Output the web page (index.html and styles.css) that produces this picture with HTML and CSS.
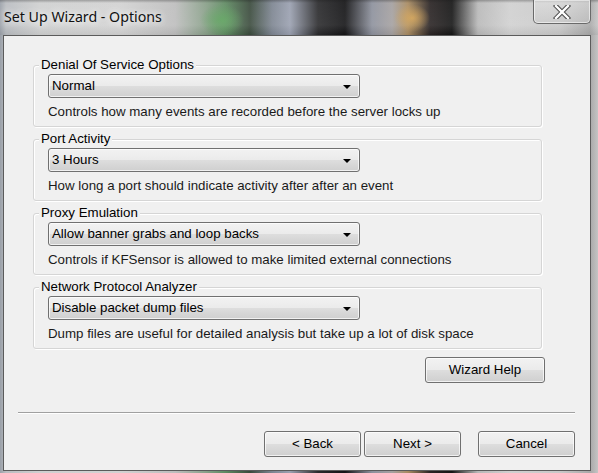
FILE: index.html
```html
<!DOCTYPE html>
<html>
<head>
<meta charset="utf-8">
<link rel="stylesheet" href="styles.css">
</head>
<body>
<div class="window">
  <div class="titlebar">
    <div class="title">Set Up Wizard - Options</div>
    <div class="close-btn">
      <svg width="18" height="14" viewBox="0 0 18 14">
        <path d="M3 1 L15 13 M15 1 L3 13" stroke="#4a4a4a" stroke-width="4.4" stroke-linecap="square" fill="none"/>
        <path d="M3 1 L15 13 M15 1 L3 13" stroke="#ffffff" stroke-width="2.4" stroke-linecap="square" fill="none"/>
      </svg>
    </div>
  </div>
  <div class="client">
    <div class="groups">
      <div class="group">
        <div class="group-label">Denial Of Service Options</div>
        <div class="select"><span>Normal</span><i class="arrow"></i></div>
        <div class="desc">Controls how many events are recorded before the server locks up</div>
      </div>
      <div class="group">
        <div class="group-label">Port Activity</div>
        <div class="select"><span>3 Hours</span><i class="arrow"></i></div>
        <div class="desc">How long a port should indicate activity after after an event</div>
      </div>
      <div class="group">
        <div class="group-label">Proxy Emulation</div>
        <div class="select"><span>Allow banner grabs and loop backs</span><i class="arrow"></i></div>
        <div class="desc">Controls if KFSensor is allowed to make limited external connections</div>
      </div>
      <div class="group">
        <div class="group-label">Network Protocol Analyzer</div>
        <div class="select"><span>Disable packet dump files</span><i class="arrow"></i></div>
        <div class="desc">Dump files are useful for detailed analysis but take up a lot of disk space</div>
      </div>
    </div>
    <div class="help-row">
      <div class="btn help">Wizard Help</div>
    </div>
    <div class="separator"></div>
    <div class="nav-row">
      <div class="btn">&lt; Back</div>
      <div class="btn next">Next &gt;</div>
      <div class="btn cancel">Cancel</div>
    </div>
  </div>
</div>
</body>
</html>
```

FILE: styles.css
```css
html, body {
  margin: 0;
  padding: 0;
}
body {
  width: 598px;
  height: 473px;
  overflow: hidden;
  font-family: "Liberation Sans", Arial, sans-serif;
  font-size: 13.3px;
  color: #000;
}
.window {
  width: 598px;
  height: 473px;
  display: flex;
  flex-direction: column;
  background:
    radial-gradient(ellipse 22px 16px at 222px 20px, rgba(90,160,90,0.95), rgba(90,160,90,0) 100%),
    radial-gradient(ellipse 18px 14px at 412px 18px, rgba(210,160,80,0.9), rgba(210,160,80,0) 100%),
    linear-gradient(to right,
      #9aa0a8 0px, #b9bcc0 6px, #cfd0d0 40px, #d2d2d2 120px, #bdbdbd 175px,
      #8aa08a 205px, #5f8a62 225px, #3a4a3c 250px, #7c8490 272px,
      #9aa0b0 290px, #2a2a2c 318px, #141416 345px, #8c909c 372px,
      #a4a0a0 392px, #a88a60 408px, #2a2424 430px, #151515 452px,
      #b8b8b8 478px, #d0d0d0 510px, #c8c8c8 560px, #a8a8a8 590px, #c4c4c4 598px);
}
.titlebar {
  height: 35px;
  flex: none;
  display: flex;
  justify-content: space-between;
  align-items: flex-start;
  background: linear-gradient(to bottom, rgba(60,60,60,0.35) 0px, rgba(255,255,255,0.08) 3px, rgba(255,255,255,0.1) 25px, rgba(0,0,0,0.05) 35px);
}
.title {
  font-family: "Noto Sans", "Open Sans", sans-serif;
  font-size: 14.2px;
  color: #111;
  margin: 7px 0 0 4px;
  line-height: 20px;
  padding: 0 6px 0 0;
  text-shadow: 0 0 6px rgba(255,255,255,0.9), 0 0 10px rgba(255,255,255,0.7);
}
.close-btn {
  width: 56px;
  height: 23px;
  margin-right: 7px;
  border: 1px solid #6a6a6a;
  border-top: none;
  border-radius: 0 0 5px 5px;
  background: linear-gradient(to bottom, rgba(230,230,230,0.55), rgba(200,200,200,0.45));
  box-shadow: inset 0 0 0 1px rgba(255,255,255,0.55);
  display: flex;
  align-items: center;
  justify-content: center;
}
.close-btn svg {
  display: block;
  margin-top: 1px;
}
.client {
  flex: none;
  margin: 0 0 0 3px;
  width: 586px;
  height: 434px;
  border: 1px solid #5b5b5b;
  background: #f0f0f0;
  display: flex;
  flex-direction: column;
}
.groups {
  display: flex;
  flex-direction: column;
  gap: 12px;
  padding: 29px 0 0 29px;
}
.group {
  width: 493px;
  height: 60px;
  border: 1px solid #d5d5d5;
  border-radius: 3px;
  box-shadow: inset 1px 1px 0 #ffffff, 1px 1px 0 #ffffff;
  padding: 0 0 0 14px;
  box-sizing: content-box;
  display: flex;
  flex-direction: column;
  align-items: flex-start;
}
.group-label {
  margin: -9px 0 0 -9px;
  padding: 0 2px;
  background: #f0f0f0;
  line-height: 16px;
  height: 16px;
}
.select {
  margin-top: 1px;
  height: 22px;
  border: 1px solid #707070;
  border-radius: 3px;
  background: linear-gradient(to bottom, #f2f2f2 0%, #ebebeb 48%, #dddddd 52%, #cfcfcf 100%);
  box-shadow: inset 0 0 0 1px rgba(255,255,255,0.7);
  display: flex;
  align-items: center;
  justify-content: space-between;
  padding: 0 8px 0 3px;
  box-sizing: content-box;
  width: 299px;
}
.select span {
  line-height: 16px;
}
.arrow {
  width: 0;
  height: 0;
  border-left: 4px solid transparent;
  border-right: 4px solid transparent;
  border-top: 4px solid #000;
  margin-top: 1px;
}
.desc {
  margin-top: 6px;
  line-height: 16px;
  color: #1a1a1a;
}
.help-row {
  display: flex;
  justify-content: flex-end;
  padding-right: 45px;
  margin-top: 8px;
}
.btn {
  width: 95px;
  height: 24px;
  border: 1px solid #707070;
  border-radius: 3px;
  background: linear-gradient(to bottom, #f2f2f2 0%, #ebebeb 48%, #dddddd 52%, #cfcfcf 100%);
  box-shadow: inset 0 0 0 1px rgba(255,255,255,0.7);
  display: flex;
  align-items: center;
  justify-content: center;
  line-height: 16px;
}
.btn.help {
  width: 118px;
}
.separator {
  margin: 29px 15px 0 14px;
  height: 1px;
  background: #a0a0a0;
  border-bottom: 1px solid #ffffff;
}
.nav-row {
  display: flex;
  justify-content: flex-end;
  padding-right: 15px;
  margin-top: 17px;
}
.btn.next {
  margin-left: 3px;
}
.btn.cancel {
  margin-left: 17px;
}
```
